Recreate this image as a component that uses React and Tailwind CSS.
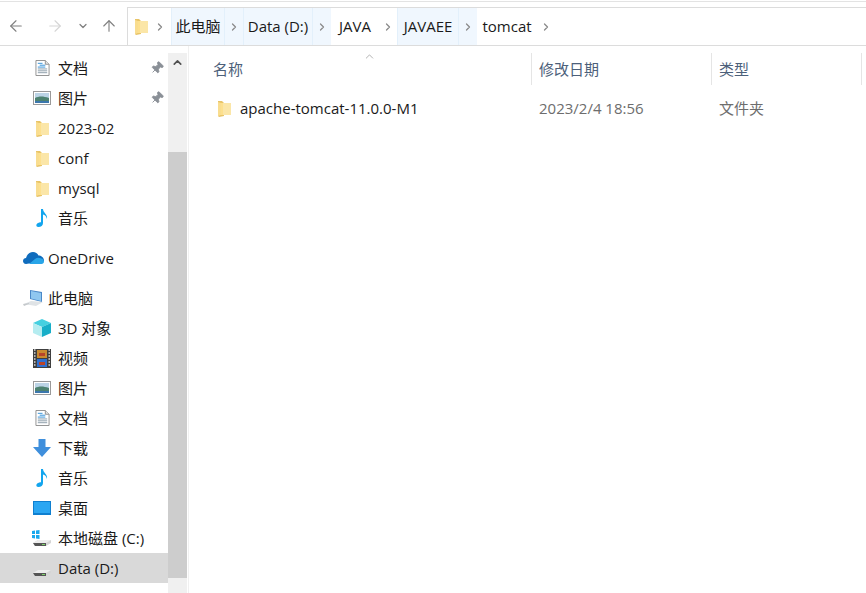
import React from 'react';
import { ArrowLeft, ArrowRight, ArrowUp, ChevronDown, ChevronRight, ChevronUp, Pin } from 'lucide-react';

const font = { fontFamily: '"Open Sans", "Noto Sans CJK SC", sans-serif' };

function FolderIcon({ className = 'w-[13px] h-[17px]' }) {
  return (
    <svg viewBox="0 0 13 17" className={className}>
      <path d="M0 1h4l2 2v13l-5 1-1-1z" fill="#e8c468" />
      <path d="M3 3h10v12H3z" fill="#fde08e" />
      <path d="M0 2l3 1v12l-3 1z" fill="#f9dd8f" />
      <path d="M5 3h8v12H5z" fill="#fbe6a8" />
    </svg>
  );
}

function DocIcon() {
  return (
    <svg viewBox="0 0 16 18" className="w-[15px] h-[18px]">
      <path d="M1 1h10l4 4v12H1z" fill="#fff" stroke="#8f8f8f" />
      <path d="M3 4h5M5 6h6M3 8h8" stroke="#2f8fd8" strokeWidth="1" />
      <path d="M3 10h10M3 12h10M3 14h10" stroke="#8a9aa8" strokeWidth="1" />
      <path d="M11 1v4h4" fill="#e5e5e5" stroke="#8f8f8f" />
    </svg>
  );
}

function PictureIcon() {
  return (
    <svg viewBox="0 0 18 14" className="w-[18px] h-[14px]">
      <rect x="0.5" y="0.5" width="17" height="13" fill="#fff" stroke="#9a9a9a" />
      <rect x="2" y="2" width="14" height="10" fill="#bcd4e6" />
      <path d="M2 7c4-2 8-2 14 0v5H2z" fill="#4d8270" />
      <path d="M2 10h14v2H2z" fill="#3c77ad" />
    </svg>
  );
}

function MusicIcon() {
  return (
    <svg viewBox="0 0 14 20" className="w-[14px] h-[20px]">
      <path d="M6 1h2c0 4 5 5 4 10-1-3-2-4-4-4.500V15c0 2.500-2 4-4.500 4C1.500 19 1 17.500 1.500 16.500 2.300 15 4.300 14 6 14.300z" fill="#12a5ee" />
    </svg>
  );
}

function CloudIcon() {
  return (
    <svg viewBox="0 0 21 14" className="w-[21px] h-[14px]">
      <path d="M3 13C1 13 0 11.500 0 10c0-2 1.500-3 3-3 1-4 4-6 7-6 2.500 0 4.500 1.500 5.500 3.500 2.500 0 5.500 2 5.500 5v.5z" fill="#0f6cbd" />
      <path d="M6 13l6-5c1.500-1 3-1.500 4-1 2 0 5 1 5 3.500 0 1.500-1 2.500-2.500 2.500z" fill="#29a5e8" />
    </svg>
  );
}

function PcIcon() {
  return (
    <svg viewBox="0 0 21 18" className="w-[21px] h-[18px]">
      <path d="M7 1l12 2v10L7 10z" fill="#4a88c8" />
      <path d="M8 2l10 2v8L8 9.500z" fill="#8fc7f0" />
      <path d="M1 15l7-3 12 1-7 4z" fill="#dfe3e6" />
      <path d="M0 15l6-1v1l-5 2z" fill="#c5c9cc" />
    </svg>
  );
}

function CubeIcon() {
  return (
    <svg viewBox="0 0 18 18" className="w-[18px] h-[18px]">
      <path d="M9 0l9 4-9 4-9-4z" fill="#45d0e0" />
      <path d="M0 4l9 4v10l-9-4z" fill="#b5ecf0" />
      <path d="M18 4L9 8v10l9-4z" fill="#17aec8" />
    </svg>
  );
}

function FilmIcon() {
  return (
    <svg viewBox="0 0 18 19" className="w-[18px] h-[19px]">
      <rect width="18" height="19" fill="#3f3f3f" />
      <path d="M1 1h1.500M1 4h1.500M1 7h1.500M1 10h1.500M1 13h1.500M1 16h1.500M15.500 1H17M15.500 4H17M15.500 7H17M15.500 10H17M15.500 13H17M15.500 16H17" stroke="#d8d8d8" strokeWidth="1.500" />
      <rect x="4" y="1" width="10" height="8" fill="#c98a30" />
      <rect x="4" y="10" width="10" height="8" fill="#2f6fd0" />
      <path d="M6 4h6v3H6zM6 13h6v3H6z" fill="#b8442a" />
    </svg>
  );
}

function DownloadIcon() {
  return (
    <svg viewBox="0 0 18 18" className="w-[18px] h-[18px]">
      <path d="M5.500 0h7v8H18l-9 10L0 8h5.500z" fill="#3f8fdc" />
    </svg>
  );
}

function DesktopIcon() {
  return (
    <svg viewBox="0 0 18 14" className="w-[18px] h-[14px]">
      <rect width="18" height="14" fill="#0f7fd0" />
      <rect x="1" y="1" width="16" height="11" fill="#2ba6f2" />
    </svg>
  );
}

function DriveIcon({ windows }) {
  return (
    <svg viewBox="0 0 20 17" className="w-[20px] h-[17px]">
      {windows && <path d="M0 1l3-.5V4H0zM4 .5L7.500 0v4H4zM0 5h3v3.500L0 8zM4 5h3.500v4L4 8.500z" fill="#18a8ee" />}
      <path d="M1 13l5-3h13v3l-5 3H3z" fill="#d5d5d5" />
      <path d="M1 13l13 0 5-3H6z" fill="#ededed" />
      <path d="M1 13h13v3H3z" fill="#555" />
      <path d="M10 14h3v1h-3z" fill="#7ed36b" />
    </svg>
  );
}

const navItems = [
  { label: '文档', icon: <DocIcon />, pinned: true },
  { label: '图片', icon: <PictureIcon />, pinned: true },
  { label: '2023-02', icon: <FolderIcon /> },
  { label: 'conf', icon: <FolderIcon /> },
  { label: 'mysql', icon: <FolderIcon /> },
  { label: '音乐', icon: <MusicIcon /> },
  { gap: true },
  { label: 'OneDrive', icon: <CloudIcon />, top: true },
  { gap: true },
  { label: '此电脑', icon: <PcIcon />, top: true },
  { label: '3D 对象', icon: <CubeIcon /> },
  { label: '视频', icon: <FilmIcon /> },
  { label: '图片', icon: <PictureIcon /> },
  { label: '文档', icon: <DocIcon /> },
  { label: '下载', icon: <DownloadIcon /> },
  { label: '音乐', icon: <MusicIcon /> },
  { label: '桌面', icon: <DesktopIcon /> },
  { label: '本地磁盘 (C:)', icon: <DriveIcon windows /> },
  { label: 'Data (D:)', icon: <DriveIcon />, selected: true },
];

function Crumb({ label, active, width }) {
  return (
    <span className={`h-full flex items-center justify-center ${width} ${active ? 'bg-[#f0f7fe] border-x border-[#e3f0fb]' : ''}`}>{label}</span>
  );
}

function Sep({ active }) {
  return (
    <span className={`h-full w-[18px] flex items-center justify-center ${active ? 'bg-[#f0f7fe]' : ''}`}>
      <ChevronRight size={12} strokeWidth={2.5} className="text-[#8a8a8a]" />
    </span>
  );
}

export default function App() {
  return (
    <div className="w-[866px] h-[593px] bg-white overflow-hidden flex flex-col" style={font}>
      <div className="h-[7px] pt-px shrink-0">
        <div className="h-px bg-[#e3e3e3]" />
      </div>
      <div className="h-[39px] shrink-0 flex border-b border-[#dcdcdc]">
        <div className="w-[127px] flex items-center text-[#808080]">
          <ArrowLeft size={18} strokeWidth={1.5} className="ml-[7px]" />
          <ArrowRight size={18} strokeWidth={1.5} className="ml-[21px] text-[#d5d5d5]" />
          <ChevronDown size={12} strokeWidth={2.5} className="ml-[13px]" />
          <ArrowUp size={18} strokeWidth={1.5} className="ml-[11px]" />
        </div>
        <div className="flex-1 flex items-center border-l border-t border-[#dcdcdc] text-[15px] leading-none text-[#1a1a1a]">
          <span className="w-[16px] ml-[5px] flex justify-center"><FolderIcon /></span>
          <span className="w-[22px] ml-[0px] flex justify-center"><ChevronRight size={12} strokeWidth={2.5} className="text-[#8a8a8a]" /></span>
          <Crumb label="此电脑" active width="w-[54px]" />
          <Sep active />
          <Crumb label="Data (D:)" active width="w-[70px]" />
          <Sep active />
          <Crumb label="JAVA" width="w-[48px]" />
          <Sep />
          <Crumb label="JAVAEE" active width="w-[62px]" />
          <Sep active />
          <Crumb label="tomcat" width="w-[60px]" />
          <Sep />
        </div>
      </div>
      <div className="flex-1 flex min-h-0">
        <div className="w-[168px] shrink-0 pt-[7px] text-[15px] text-[#1a1a1a]">
          {navItems.map((item, i) =>
            item.gap ? (
              <div key={i} className="h-[10px]" />
            ) : (
              <div key={i} className={`h-[30px] flex items-center ${item.selected ? 'bg-[#d9d9d9]' : ''}`}>
                <span className={`flex justify-center shrink-0 ${item.top ? 'w-[27px] ml-[20px] mr-[1px]' : 'w-[24px] ml-[30px] mr-[4px]'}`}>
                  {item.icon}
                </span>
                <span className="whitespace-nowrap flex-1">{item.label}</span>
                {item.pinned && <Pin size={14} strokeWidth={1.5} fill="#8a9097" className="mr-[4px] text-[#8a9097] rotate-45" />}
              </div>
            ),
          )}
        </div>
        <div className="w-[19px] shrink-0 mt-[7px] bg-[#f0f0f0] flex flex-col">
          <div className="h-[18px] flex items-center justify-center">
            <ChevronUp size={13} strokeWidth={3} className="text-[#505050]" />
          </div>
          <div className="h-[81px]" />
          <div className="h-[426px] bg-[#cdcdcd]" />
        </div>
        <div className="w-px ml-[1px] shrink-0 bg-[#f0f0f0]" />
        <div className="flex-1 text-[15px]">
          <div className="relative h-[32px] mt-[7px] flex items-stretch text-[#4c607a]">
            <ChevronUp size={13} strokeWidth={1.2} className="absolute left-[174px] -top-[3px] text-[#8a8a8a]" />
            <div className="w-[343px] pl-[24px] flex items-center border-r border-[#e5e5e5]">名称</div>
            <div className="w-[180px] pl-[7px] flex items-center border-r border-[#e5e5e5]">修改日期</div>
            <div className="w-[150px] pl-[7px] flex items-center border-r border-[#e5e5e5]">类型</div>
          </div>
          <div className="h-[30px] mt-[8px] flex items-center">
            <span className="w-[51px] pl-[29px] shrink-0"><FolderIcon /></span>
            <span className="w-[299px] shrink-0 text-[#1a1a1a] whitespace-nowrap">apache-tomcat-11.0.0-M1</span>
            <span className="w-[180px] shrink-0 text-[#6d6d6d]">2023/2/4 18:56</span>
            <span className="text-[#6d6d6d]">文件夹</span>
          </div>
        </div>
      </div>
    </div>
  );
}
